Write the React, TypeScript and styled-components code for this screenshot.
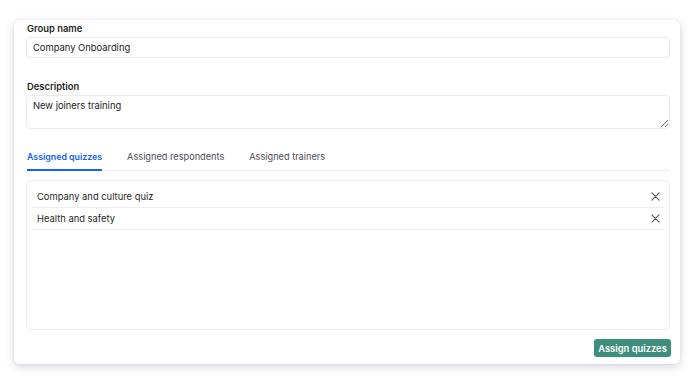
import styled, { createGlobalStyle } from 'styled-components';

const GlobalStyle = createGlobalStyle`
  html, body {
    margin: 0;
    padding: 0;
    background: #ffffff;
    font-family: 'Inter', 'Noto Sans', sans-serif;
  }
`;

const quizzes = ['Company and culture quiz', 'Health and safety'];
const tabs = ['Assigned quizzes', 'Assigned respondents', 'Assigned trainers'];

function CloseIcon() {
  return (
    <svg width="9" height="9" viewBox="0 0 10 10" fill="none">
      <path d="M1 1L9 9M9 1L1 9" stroke="#555" strokeWidth="1.2" strokeLinecap="round" />
    </svg>
  );
}

export default function App() {
  return (
    <>
      <GlobalStyle />
      <Page>
        <Card>
          <Label>Group name</Label>
          <Input defaultValue="Company Onboarding" />
          <Label $spaced>Description</Label>
          <TextArea defaultValue="New joiners training" />
          <TabBar>
            {tabs.map((t, i) => (
              <Tab key={t} $active={i === 0}>
                {t}
              </Tab>
            ))}
          </TabBar>
          <ListPanel>
            {quizzes.map((q) => (
              <Row key={q}>
                <span>{q}</span>
                <RemoveButton aria-label="Remove">
                  <CloseIcon />
                </RemoveButton>
              </Row>
            ))}
          </ListPanel>
          <Footer>
            <PrimaryButton>Assign quizzes</PrimaryButton>
          </Footer>
        </Card>
      </Page>
    </>
  );
}

const Page = styled.div`
  padding: 20px 20px 20px 14px;
`;

const Card = styled.div`
  width: 666px;
  height: 344px;
  box-sizing: border-box;
  padding: 2px 9px 7px 12px;
  background: #fff;
  border-radius: 6px;
  box-shadow: 0 3px 10px rgba(70, 70, 110, 0.22), 0 0 2px rgba(70, 70, 110, 0.12);
  display: flex;
  flex-direction: column;
`;

const Label = styled.div<{ $spaced?: boolean }>`
  font-size: 9.4px;
  font-weight: 600;
  color: #1f1f24;
  line-height: 13px;
  margin-top: ${(p) => (p.$spaced ? '22px' : '0')};
  margin-bottom: 2px;
  padding-left: 1px;
`;

const Input = styled.input`
  height: 21px;
  box-sizing: border-box;
  margin: 0 1px 0 0;
  border: 1px solid #e9e9ef;
  border-radius: 4px;
  padding: 0 6px;
  font-family: inherit;
  font-size: 9.4px;
  color: #222;
  outline: none;
`;

const TextArea = styled.textarea`
  height: 34px;
  box-sizing: border-box;
  margin: 0 1px 0 0;
  border: 1px solid #e9e9ef;
  border-radius: 4px;
  padding: 4px 6px;
  font-family: inherit;
  font-size: 9.4px;
  color: #222;
  outline: none;
  resize: vertical;
`;

const TabBar = styled.div`
  display: flex;
  gap: 25px;
  margin: 13px 1px 0 1px;
  border-bottom: 1px solid #ececf1;
`;

const Tab = styled.div<{ $active?: boolean }>`
  font-size: ${(p) => (p.$active ? '8.8px' : '9.2px')};
  line-height: 14px;
  padding: 8px 0 5px;
  font-weight: ${(p) => (p.$active ? 600 : 400)};
  color: ${(p) => (p.$active ? '#1463f0' : '#4d4d55')};
  border-bottom: 2px solid ${(p) => (p.$active ? '#1463f0' : 'transparent')};
  margin-bottom: -1px;
`;

const ListPanel = styled.div`
  flex: 1;
  margin: 9px 1px 0 0;
  border: 1px solid #ececf1;
  border-radius: 4px;
  padding: 5px 5px 4px;
`;

const Row = styled.div`
  display: flex;
  align-items: center;
  justify-content: space-between;
  height: 22px;
  box-sizing: border-box;
  padding: 0 4px 0 5px;
  border-bottom: 1px solid #ececf1;
  font-size: 9.4px;
  color: #1f1f24;
`;

const RemoveButton = styled.button`
  border: none;
  background: none;
  padding: 0;
  display: flex;
  cursor: pointer;
`;

const Footer = styled.div`
  display: flex;
  justify-content: flex-end;
  margin-top: 9px;
`;

const PrimaryButton = styled.button`
  height: 18px;
  width: 77px;
  padding: 0;
  border: none;
  border-radius: 3px;
  background: #3d8f7b;
  color: #fff;
  font-family: inherit;
  font-size: 9.4px;
  font-weight: 600;
  cursor: pointer;
`;
